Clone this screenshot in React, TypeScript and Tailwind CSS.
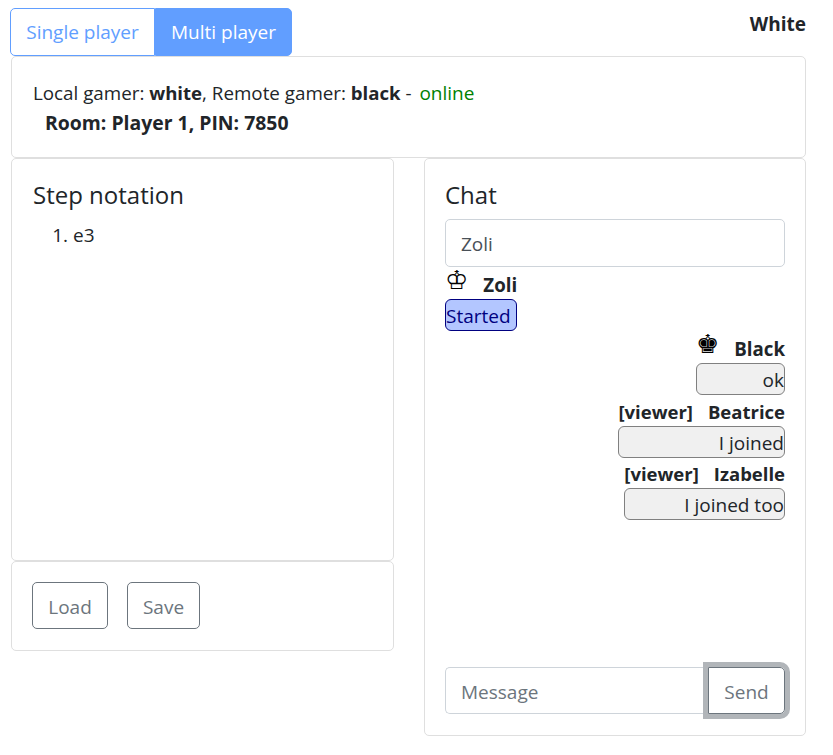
export default function App() {
  return (
    <div className="min-h-[755px] bg-white pl-[11px] pr-[27px] pt-2 font-['Open_Sans',sans-serif] text-[19px] leading-[30px] text-[#212529]">
      <div className="flex items-start justify-between">
        <div className="-ml-px flex h-12">
          <button className="w-[145px] rounded-l-[5px] border border-[#619eff] bg-white text-[#619eff]">Single player</button>
          <button className="w-[137px] rounded-r-[5px] border border-[#619eff] bg-[#619eff] text-white">Multi player</button>
        </div>
        <div className="pt-[1px] font-bold">White</div>
      </div>

      <div className="h-[102px] rounded-[5px] border border-[#dfdfdf] px-[21px] pt-[21px]">
        <div className="text-[18.8px]">
          Local gamer: <b className="text-[18.6px]">white</b>, Remote gamer: <b className="text-[18.6px]">black</b> - <span className="ml-[3px] text-[19px] text-[#008000]">online</span>
        </div>
        <div className="pl-[12px] text-[19.4px] font-bold">Room: Player 1, PIN: 7850</div>
      </div>

      <div className="grid grid-cols-[383px_382px] gap-x-[30px]">
        <div>
          <div className="h-[403px] rounded-[5px] border border-[#dfdfdf] px-[21px] pt-[19px]">
            <h5 className="mb-[9px] text-[24px] font-medium leading-[33px]">Step notation</h5>
            <ol className="list-decimal pl-10">
              <li>e3</li>
            </ol>
          </div>
          <div className="flex h-[90px] gap-[19px] rounded-[5px] border border-[#dfdfdf] px-5 pt-5">
            <button className="h-[47px] w-[76px] rounded-[5px] border border-[#6c757d] pt-[2px] text-[#6c757d]">Load</button>
            <button className="h-[47px] w-[73px] rounded-[5px] border border-[#6c757d] pt-[2px] text-[#6c757d]">Save</button>
          </div>
        </div>

        <div className="flex h-[578px] flex-col rounded-[5px] border border-[#dfdfdf] px-5 pt-[19px]">
          <h5 className="mb-2 text-[24px] font-medium leading-[33px]">Chat</h5>
          <input
            readOnly
            value="Zoli"
            className="h-12 w-full rounded-[5px] border border-[#ced4da] px-[15px] pt-[2px] text-[#495057] outline-none"
          />
          <div className="flex flex-1 flex-col">
            <Message align="left" piece="♔" name="Zoli" text="Started" blue />
            <Message align="right" piece="♚" name="Black" text="ok" />
            <Message align="right" tag="[viewer]" name="Beatrice" text="I joined" />
            <Message align="right" tag="[viewer]" name="Izabelle" text="I joined too" />
          </div>
          <div className="mb-[21px] flex h-[47px]">
            <input
              readOnly
              placeholder="Message"
              className="h-full min-w-0 flex-1 rounded-l-[5px] border border-r-0 border-[#ced4da] px-[15px] pt-[2px] outline-none placeholder:text-[#6c757d]"
            />
            <button className="relative h-full w-[77px] rounded-r-[5px] border border-[#6c757d] pt-[2px] text-[#6c757d] shadow-[0_0_0_5px_#b1b5b9]">
              Send
            </button>
          </div>
        </div>
      </div>
    </div>
  );
}

interface MessageProps {
  align: "left" | "right";
  piece?: string;
  tag?: string;
  name: string;
  text: string;
  blue?: boolean;
}

function Message({ align, piece, tag, name, text, blue }: MessageProps) {
  return (
    <div className={align === "left" ? "w-fit" : "ml-auto w-fit"}>
      <div className={piece ? "flex h-8 items-end text-[18.7px] font-bold leading-[28px]" : "flex h-[30.5px] items-end text-[18.5px] font-bold leading-[28px]"}>
        {piece && <span className="mr-[15px] pb-[4px] font-['DejaVu_Sans',sans-serif] text-[26px] font-normal leading-[30px] text-black">{piece}</span>}
        {tag && <span className="mr-[15px]">{tag}</span>}
        <span>{name}</span>
      </div>
      {blue ? (
        <div className="h-8 rounded-[6px] border border-[#000080] bg-[#b3c6ff] pt-px text-[#000080]">{text}</div>
      ) : (
        <div className="h-8 rounded-[6px] border border-[#808080] bg-[#f0f0f0] pt-px text-right">{text}</div>
      )}
    </div>
  );
}
